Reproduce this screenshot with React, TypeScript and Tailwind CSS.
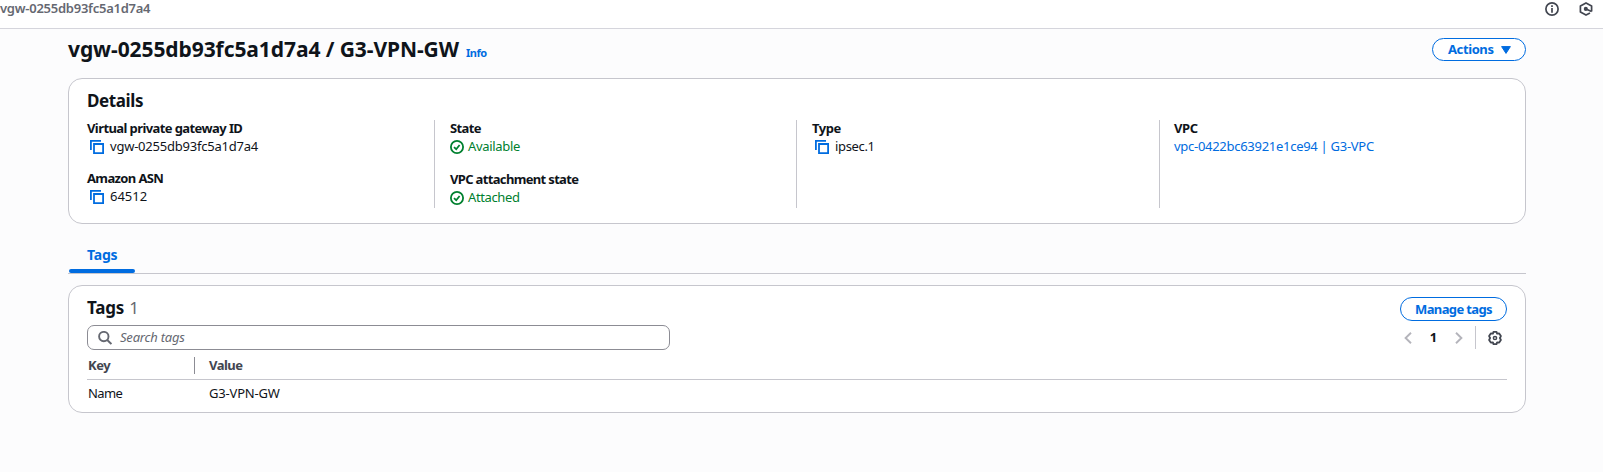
import type { ReactNode } from 'react';

const CopyIcon = () => (
  <svg className="h-[14px] w-[14px] shrink-0" viewBox="0 0 14 14" fill="none" stroke="#006ce0" strokeWidth="1.8">
    <path d="M0.9 10V0.9H11" />
    <path d="M4 4H13.1V13.1H4Z" />
  </svg>
);

const CheckIcon = () => (
  <svg className="h-[14px] w-[14px] shrink-0" viewBox="0 0 14 14" fill="none" stroke="#00802f" strokeWidth="1.8">
    <circle cx="7" cy="7" r="6.1" />
    <path d="M4 7.2L6.2 9.2L9.6 5" />
  </svg>
);

const InfoIcon = () => (
  <svg className="h-[14px] w-[14px]" viewBox="0 0 14 14" fill="none" stroke="#424650" strokeWidth="1.7">
    <circle cx="7" cy="7" r="6.1" />
    <path d="M7 6V10.7M7 3.3V5" />
  </svg>
);

const HexIcon = () => (
  <svg className="h-[14px] w-[14px]" viewBox="0 0 14 14" fill="none" stroke="#424650" strokeWidth="1.7">
    <path d="M12.6 9.6V3.9L7 0.9L1.4 3.9V10.1L7 13.1L11 11" strokeLinejoin="round" />
    <path d="M7 7L12.6 9.6" />
    <circle cx="6.8" cy="6.9" r="1.2" fill="#424650" />
  </svg>
);

const GearIcon = () => (
  <svg className="h-[14px] w-[14px]" viewBox="0 0 14 14" fill="none" stroke="#424650" strokeWidth="1.8" strokeLinejoin="round">
    <path d="M5.5 0.9H8.5L9.1 2.7L11.2 2.4L12.9 5L11.9 7L12.9 9L11.2 11.6L9.1 11.3L8.5 13.1H5.5L4.9 11.3L2.8 11.6L1.1 9L2.1 7L1.1 5L2.8 2.4L4.9 2.7Z" />
    <circle cx="7" cy="7" r="1.6" strokeWidth="1.5" />
  </svg>
);

const SearchIcon = () => (
  <svg className="h-[14px] w-[14px]" viewBox="0 0 14 14" fill="none" stroke="#656871" strokeWidth="1.9">
    <circle cx="5.8" cy="5.6" r="4.7" />
    <path d="M9.2 9L13.4 13.1" />
  </svg>
);

const Chevron = ({ d }: { d: string }) => (
  <svg className="h-3 w-2" viewBox="0 0 8 12" fill="none" stroke="#b4b4bb" strokeWidth="1.9">
    <path d={d} />
  </svg>
);

const Field = ({ label, labelClass, children }: { label: string; labelClass: string; children: ReactNode }) => (
  <div>
    <div className={`h-[17px] font-bold leading-[16px] ${labelClass}`}>{label}</div>
    <div className="flex h-[19px] items-start leading-[18px]">{children}</div>
  </div>
);

export default function App() {
  return (
    <div className="h-[472px] w-[1603px] overflow-hidden whitespace-nowrap bg-[#fcfcfd] font-['Noto_Sans',sans-serif] text-[13px] text-[#0f141a]">
      <header className="flex h-[29px] justify-between border-b border-[#d5d5dc] bg-white pr-[10px]">
        <span className="h-[16px] font-semibold leading-[16px] tracking-[-0.25px] text-[#656871]">vgw-0255db93fc5a1d7a4</span>
        <div className="flex gap-[20px] pt-[2px]">
          <InfoIcon />
          <HexIcon />
        </div>
      </header>

      <main className="ml-[68px] w-[1458px]">
        <div className="flex h-[49px] items-start justify-between pt-[9px]">
          <div className="flex items-baseline gap-[7px]">
            <h1 className="text-[21px] font-bold leading-[23px] tracking-[-0.08px]">vgw-0255db93fc5a1d7a4 / G3-VPN-GW</h1>
            <a className="text-[11px] font-bold tracking-[-0.5px] text-[#006ce0]">Info</a>
          </div>
          <button className="flex h-[23px] w-[94px] items-center justify-between rounded-full border border-[#006ce0] bg-white pl-[15px] pr-[14px] font-bold tracking-[-0.4px] text-[#006ce0]">
            Actions
            <svg className="h-[8px] w-[10px]" viewBox="0 0 10 8">
              <path d="M0.6 0.6H9.4L5 7.4Z" fill="#006ce0" stroke="#006ce0" strokeLinejoin="round" />
            </svg>
          </button>
        </div>

        <section className="h-[146px] rounded-[14px] border border-[#c6c6cd] bg-white pl-[18px] pt-[11px]">
          <h2 className="h-[30px] text-[17px] font-bold leading-[22px] tracking-[-0.4px]">Details</h2>
          <div className="grid h-[88px] grid-cols-[347px_362px_363px_350px]">
            <div className="flex flex-col gap-[14px]">
              <Field label="Virtual private gateway ID" labelClass="tracking-[-0.59px]">
                <span className="pl-[3px] pt-[3px]"><CopyIcon /></span>
                <span className="pl-[6px] tracking-[-0.22px]">vgw-0255db93fc5a1d7a4</span>
              </Field>
              <Field label="Amazon ASN" labelClass="tracking-[-0.63px]">
                <span className="pl-[3px] pt-[3px]"><CopyIcon /></span>
                <span className="pl-[6px]">64512</span>
              </Field>
            </div>
            <div className="flex flex-col gap-[15px] border-l border-[#c6c6cd] pl-[15px]">
              <Field label="State" labelClass="tracking-[-0.6px]">
                <span className="pt-[3px]"><CheckIcon /></span>
                <span className="pl-1 tracking-[-0.32px] text-[#00802f]">Available</span>
              </Field>
              <Field label="VPC attachment state" labelClass="tracking-[-0.66px]">
                <span className="pt-[3px]"><CheckIcon /></span>
                <span className="pl-1 tracking-[-0.38px] text-[#00802f]">Attached</span>
              </Field>
            </div>
            <div className="border-l border-[#c6c6cd] pl-[15px]">
              <Field label="Type" labelClass="tracking-[-0.5px]">
                <span className="pl-[3px] pt-[3px]"><CopyIcon /></span>
                <span className="pl-[6px] tracking-[-0.35px]">ipsec.1</span>
              </Field>
            </div>
            <div className="border-l border-[#c6c6cd] pl-[14px]">
              <Field label="VPC" labelClass="tracking-[-0.4px]">
                <a className="tracking-[-0.28px] text-[#006ce0]">vpc-0422bc63921e1ce94 | G3-VPC</a>
              </Field>
            </div>
          </div>
        </section>

        <nav className="flex h-[50px] items-end border-b border-[#c6c6cd]">
          <div className="ml-px flex h-[28px] w-[66px] flex-col justify-between text-[14px] font-bold text-[#006ce0]">
            <span className="pl-[18px] leading-[20px] tracking-[-0.2px]">Tags</span>
            <span className="h-1 rounded-[2px] bg-[#006ce0]" />
          </div>
        </nav>

        <section className="mt-[11px] h-[128px] rounded-[14px] border border-[#c6c6cd] bg-white px-[18px] pt-[11px]">
          <div className="flex h-[28px] justify-between">
            <h2 className="text-[17px] font-bold leading-[22px] tracking-[-0.2px]">
              Tags <span className="pl-px font-normal text-[#656871]">1</span>
            </h2>
            <button className="h-6 w-[107px] rounded-full border border-[#006ce0] bg-white font-bold leading-[20px] tracking-[-0.63px] text-[#006ce0]">
              Manage tags
            </button>
          </div>
          <div className="flex justify-between">
            <div className="flex h-[25px] w-[583px] items-center gap-[8px] rounded-[7px] border border-[#8c8c94] pl-[10px]">
              <SearchIcon />
              <span className="italic tracking-[-0.2px] text-[#656871]">Search tags</span>
            </div>
            <div className="flex h-[25px] items-center pr-[5px]">
              <Chevron d="M7 0.8L1.6 6L7 11.2" />
              <span className="w-[43px] text-center font-bold">1</span>
              <Chevron d="M1 0.8L6.4 6L1 11.2" />
              <span className="ml-[12px] mr-[12px] h-[23px] w-px bg-[#c6c6cd]" />
              <GearIcon />
            </div>
          </div>
          <div className="flex h-[30px] items-center border-b border-[#c6c6cd] pl-[1px] pt-[2px] font-bold tracking-[-0.5px] text-[#424650]">
            <span className="w-[106px]">Key</span>
            <span className="h-[17px] w-px bg-[#8c8c94]" />
            <span className="pl-[14px]">Value</span>
          </div>
          <div className="flex h-[27px] items-center pl-[1px]">
            <span className="w-[121px] tracking-[-0.6px]">Name</span>
            <span className="tracking-[-0.18px]">G3-VPN-GW</span>
          </div>
        </section>
      </main>
    </div>
  );
}
